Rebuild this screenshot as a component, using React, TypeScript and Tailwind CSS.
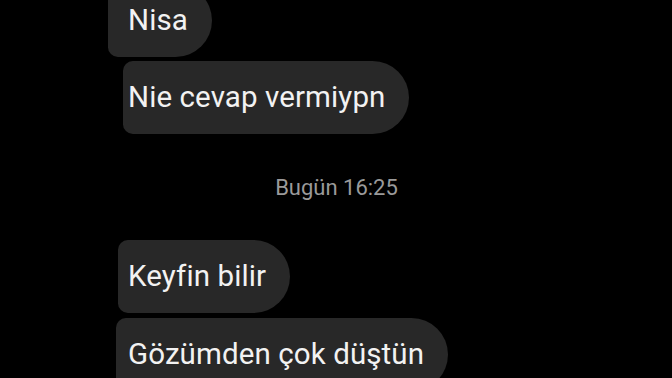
const Bubble = ({ text, className }: { text: string; className: string }) => {
  return (
    <div
      className={`h-[73px] flex items-center bg-[#282828] rounded-l-[10px] rounded-r-[37px] pr-[24px] text-[29.5px] tracking-[0.1px] text-[#f2f2f2] ${className}`}
    >
      {text}
    </div>
  );
};

export default function App() {
  return (
    <div
      className="w-[672px] h-[378px] overflow-hidden bg-black"
      style={{ fontFamily: "Roboto, 'Noto Sans', sans-serif" }}
    >
      <div className="-mt-[16px] flex flex-col items-start">
        <Bubble text="Nisa" className="ml-[108px] pl-[20px]" />
        <Bubble text="Nie cevap vermiypn" className="ml-[123px] pl-[5px] mt-[4px]" />
        <div className="w-full flex justify-center pl-[1px] mt-[40px] h-[26px] items-center text-[22px] text-[#9a9a9a]">
          Bugün 16:25
        </div>
        <Bubble text="Keyfin bilir" className="ml-[118px] pl-[10px] mt-[40px]" />
        <Bubble text="Gözümden çok düştün" className="ml-[116px] pl-[12px] mt-[5px]" />
      </div>
    </div>
  );
}
